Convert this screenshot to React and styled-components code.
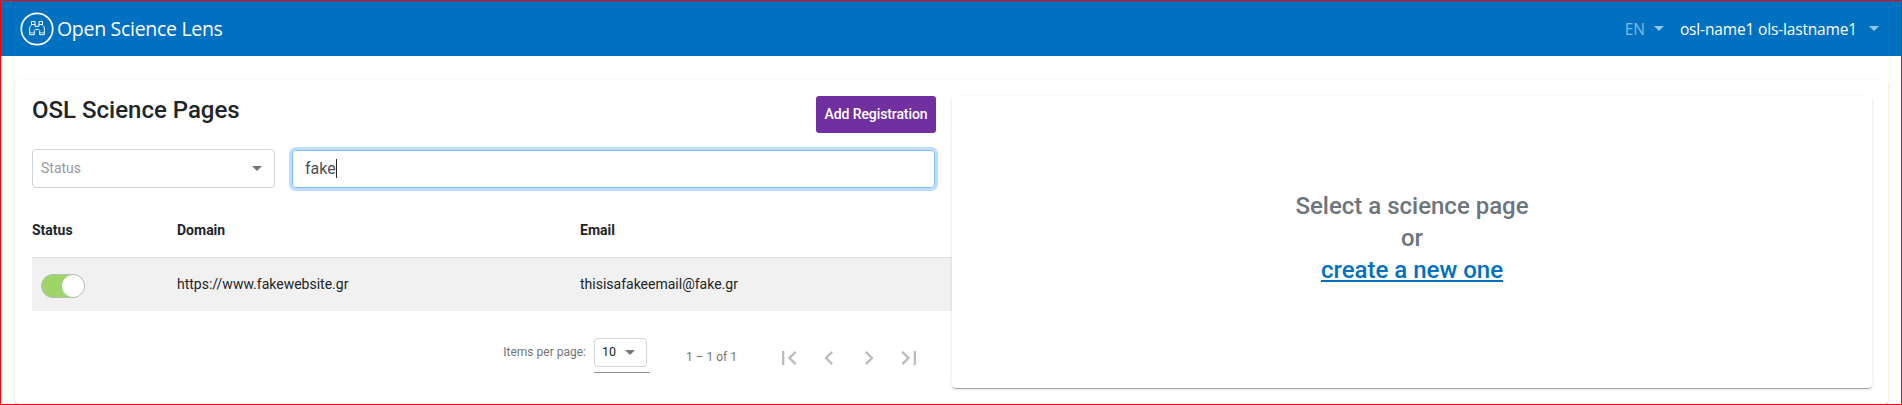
import React from 'react';
import styled, { createGlobalStyle } from 'styled-components';

const Global = createGlobalStyle`
  *, *::before, *::after { box-sizing: border-box; }
  body { margin: 0; background: #fff; font-family: Roboto, "Liberation Sans", sans-serif; color: #212529; }
`;
const elevation = '0 2px 1px -1px rgba(0,0,0,.2), 0 1px 1px 0 rgba(0,0,0,.14), 0 1px 3px 0 rgba(0,0,0,.12)';

const Page = styled.div`
  height: 405px; border: 1px solid #f00; overflow: hidden;
  display: flex; flex-direction: column;
`;
const Header = styled.header`
  flex: none; height: 55px; padding: 0 22px 0 19px; background: #0070c0; color: #fff;
  display: flex; align-items: center; justify-content: space-between;
  font-family: "Open Sans", "Noto Sans", sans-serif;
`;
const Brand = styled.div`
  display: flex; align-items: center; gap: 3px; font-size: 19.5px; letter-spacing: -0.3px; line-height: 28px;
`;
const Nav = styled.nav`display: flex; align-items: center; font-size: 15.5px; line-height: 24px;`;
const NavItem = styled.span`
  display: flex; align-items: center; white-space: nowrap;
  gap: ${p => p.$gap}px; margin-left: ${p => p.$left || 0}px;
  letter-spacing: ${p => p.$spacing || 0}px; color: ${p => (p.$muted ? 'rgba(255,255,255,.5)' : '#fff')};
`;
const Caret = styled.span`
  width: 0; height: 0; border: solid transparent; border-width: 5px 5px 0; border-top-color: ${p => p.$color};
`;
const Card = styled.main`
  flex: none; margin: 24px 13px 0 14px; height: 324px; padding: 16px 16px 16px 17px; border-radius: 4px;
  box-shadow: ${elevation}; display: flex;
`;
const Left = styled.section`width: 920px; flex: none; display: flex; flex-direction: column;`;
const TitleRow = styled.div`
  display: flex; justify-content: space-between; align-items: flex-start; width: 904px; height: 53px;
`;
const Title = styled.h1`margin: 0; font-size: 24px; font-weight: 500; line-height: 28px;`;
const AddButton = styled.button`
  width: 120px; height: 37px; padding: 0; border: 0; border-radius: 3px; background: #7030a0; color: #fff;
  font: 500 14px/35px Roboto, sans-serif; letter-spacing: -0.1px;
`;
const Filters = styled.div`display: flex; align-items: flex-end; gap: 17px; width: 903px; height: 39px;`;
const StatusSelect = styled.div`
  width: 243px; height: 39px; border: 1px solid #ced4da; border-radius: 4px; padding: 0 12px 1px 8px;
  display: flex; align-items: center; justify-content: space-between; font-size: 14px; color: #999;
`;
const Search = styled.div`
  flex: 1; height: 38px; border: 1px solid #80bdff; border-radius: 4px; padding: 0 12px 1px;
  box-shadow: 0 0 0 3px #bfdeff; display: flex; align-items: center; font-size: 16px; color: #495057;
`;
const TextCursor = styled.i`width: 1px; height: 19px; background: #212529;`;
const Row = styled.div`
  display: grid; grid-template-columns: 145px 403px 1fr; font-size: 14px;
`;
const HeadRow = styled(Row)`
  height: 70px; padding-top: 34px; line-height: 16px; font-weight: 700; border-bottom: 1px solid #dee2e6;
`;
const DataRow = styled(Row)`
  height: 53px; background: #f1f1f1; align-items: center; padding-bottom: 1px;
`;
const Toggle = styled.div`
  width: 44px; height: 24px; margin: 3px 0 0 9px; border: 1px solid #b5bcbc; border-radius: 12px; background: #9fd468;
  display: flex; justify-content: flex-end;
`;
const Thumb = styled.span`width: 22px; height: 22px; border-radius: 50%; background: #fff;`;
const Paginator = styled.footer`
  display: flex; align-items: flex-start; padding: 27px 29px 0 0; justify-content: flex-end;
  font-size: 12px; color: #757575; line-height: 16px;
`;
const PageLabel = styled.span`margin: ${p => p.$top}px ${p => p.$right}px 0 0; white-space: nowrap;`;
const SizeField = styled.div`width: 56px; height: 35px; border-bottom: 1px solid #949494; margin-right: 36px;`;
const SizeSelect = styled.div`
  width: 53px; height: 29px; border: 1px solid #ced4da; border-radius: 4px; padding: 0 11px 1px 7px;
  display: flex; align-items: center; justify-content: space-between; color: #212529; font-size: 12.5px;
`;
const Pages = styled.div`display: flex; margin-top: 6px; gap: 12px;`;
const PageIcon = styled.svg`width: 28px; height: 28px; fill: #bdbdbd; display: block;`;
const Detail = styled.section`
  flex: 1; height: 292px; padding-bottom: 8px; border-radius: 4px; box-shadow: ${elevation}; background: #fff;
  display: flex; flex-direction: column; align-items: center; justify-content: center;
  font-size: 24px; line-height: 32px; font-weight: 500; color: #6c757d;
`;
const Link = styled.a`color: #0070c0; text-decoration: underline;`;

const icons = [
  'M18.41 16.59L13.82 12l4.59-4.59L17 6l-6 6 6 6zM6 6h2v12H6z',
  'M15.41 7.41L14 6l-6 6 6 6 1.41-1.41L10.83 12z',
  'M10 6L8.59 7.41 13.17 12l-4.58 4.59L10 18l6-6z',
  'M5.59 7.41L10.18 12l-4.59 4.59L7 18l6-6-6-6zM16 6h2v12h-2z',
];

const Logo = () => (
  <svg width="34" height="34" viewBox="0 0 34 34" fill="none" stroke="#fff">
    <circle cx="17" cy="17" r="15.7" strokeWidth="1.7" />
    <g strokeWidth="1" strokeLinejoin="round">
      <path d="M11.5 13V9.5h3.5V13M19 13V9.5h3.5V13" />
      <path d="M11.5 12.5c-.2 1.6-1.8 1.6-1.8 3.4v6.8h4.6v-4.2l1-1h3.4l1 1v4.2h4.6v-6.8c0-1.8-1.6-1.8-1.8-3.4H19v1.8h-4v-1.8z" />
      <path d="M9.7 20.8h4.6M19.7 20.8h4.6" strokeOpacity="0.7" />
    </g>
  </svg>
);

export default function App() {
  return (
    <Page>
      <Global />
      <Header>
        <Brand><Logo /><span>Open Science Lens</span></Brand>
        <Nav>
          <NavItem $gap={9} $muted>EN <Caret $color="rgba(255,255,255,.6)" /></NavItem>
          <NavItem $gap={12} $left={16} $spacing={-0.16}>osl-name1 ols-lastname1 <Caret $color="rgba(255,255,255,.6)" /></NavItem>
        </Nav>
      </Header>
      <Card>
        <Left>
          <TitleRow><Title>OSL Science Pages</Title><AddButton>Add Registration</AddButton></TitleRow>
          <Filters>
            <StatusSelect>Status <Caret $color="#757575" /></StatusSelect>
            <Search>fake<TextCursor /></Search>
          </Filters>
          <HeadRow><span>Status</span><span>Domain</span><span>Email</span></HeadRow>
          <DataRow>
            <Toggle><Thumb /></Toggle>
            <span>https://www.fakewebsite.gr</span>
            <span>thisisafakeemail@fake.gr</span>
          </DataRow>
          <Paginator>
            <PageLabel $top={6} $right={8}>Items per page:</PageLabel>
            <SizeField><SizeSelect>10 <Caret $color="#757575" /></SizeSelect></SizeField>
            <PageLabel $top={11} $right={38}>1 – 1 of 1</PageLabel>
            <Pages>{icons.map(d => <PageIcon key={d} viewBox="0 0 24 24"><path d={d} /></PageIcon>)}</Pages>
          </Paginator>
        </Left>
        <Detail>
          <span>Select a science page</span>
          <span>or</span>
          <Link>create a new one</Link>
        </Detail>
      </Card>
    </Page>
  );
}
